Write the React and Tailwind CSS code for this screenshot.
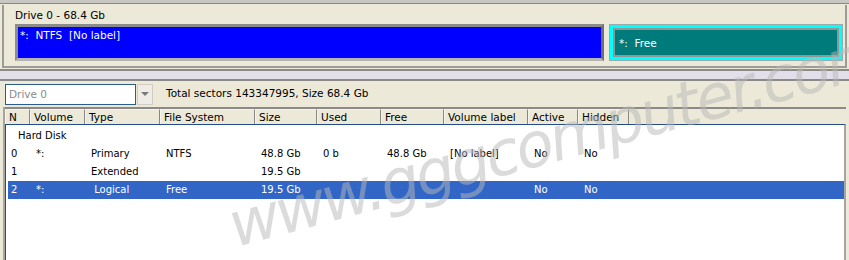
import React from "react";

const cols = [
  { label: "N", w: 25 },
  { label: "Volume", w: 55 },
  { label: "Type", w: 75 },
  { label: "File System", w: 95 },
  { label: "Size", w: 62 },
  { label: "Used", w: 64 },
  { label: "Free", w: 63 },
  { label: "Volume label", w: 84 },
  { label: "Active", w: 50 },
  { label: "Hidden", w: 51 },
];

const rows = [
  ["0", "*:", "Primary", "NTFS", "48.8 Gb", "0 b", "48.8 Gb", "[No label]", "No", "No"],
  ["1", "", "Extended", "", "19.5 Gb", "", "", "", "", ""],
  ["2", "*:", " Logical", "Free", "19.5 Gb", "", "", "", "No", "No"],
];

const App = () => {
  return (
    <div
      className="relative w-[849px] h-[260px] overflow-hidden bg-[#ece9d8] text-[10px] text-black flex flex-col"
      style={{ fontFamily: '"DejaVu Sans", "Liberation Sans", sans-serif' }}
    >
      {/* top window edge */}
      <div className="h-[4px] bg-[#c9c7c4] border-b border-[#8a8886]"></div>

      {/* drive map panel */}
      <div className="mx-[2px] mt-[1px] h-[63px] border-l-2 border-r-2 border-b-2 border-[#9d9b97] flex flex-col">
        <div className="h-[18px] pl-[11px] pt-[3px] leading-[14px] text-[10.5px]">Drive 0 - 68.4 Gb</div>
        <div className="flex items-start gap-[5px] pl-[11px] pt-[1px]">
          <div className="w-[589px] h-[37px] bg-[#0000ff] border-[3px] border-t-[#8c8c8c] border-l-[#8c8c8c] border-b-[#b5b5b5] border-r-[#6f6f6f] text-white pl-[2px] pt-[1px] leading-[14px] text-[10.5px]">
            *: &nbsp;NTFS &nbsp;[No label]
          </div>
          <div className="w-[234px] h-[37px] border border-[#9aa] bg-[#00ffff] p-[3px]">
            <div className="h-full bg-[#007b7b] border-2 border-[#8f9694] text-white text-[10.5px] pl-[4px] pt-[6px] leading-[14px]">
              *:&nbsp; Free
            </div>
          </div>
        </div>
      </div>

      {/* splitter */}
      <div className="h-[12px] mt-[1px] bg-[#e3dfea] border-t-2 border-b-2 border-[#8c8a88]"></div>

      {/* toolbar */}
      <div className="h-[26px] flex items-center pl-[5px]">
        <div className="w-[131px] h-[21px] border border-[#2b5d8c] bg-white text-[#8a8a8a] pl-[3px] leading-[19px] text-[10.5px]">
          Drive 0
        </div>
        <div className="w-[16px] h-[21px] ml-[1px] border border-[#cfcdc6] bg-[#eeece4] flex items-center justify-center">
          <div className="w-0 h-0 border-l-[4px] border-r-[4px] border-t-[4px] border-l-transparent border-r-transparent border-t-[#7a7a7a]"></div>
        </div>
        <div className="ml-[13px] text-[10.5px]">Total sectors 143347995, Size 68.4 Gb</div>
      </div>

      {/* table */}
      <div className="flex-1 flex flex-col mx-[3px] border-l-2 border-[#a8a4a0]">
        <div className="h-[17px] flex border-t-2 border-[#8c8a88]">
          {cols.map((c) => (
            <div
              key={c.label}
              style={{ width: c.w }}
              className="shrink-0 h-[16px] border border-t-[#f4f3ef] border-l-[#f4f3ef] border-b-[#8a8886] border-r-[#8a8886] pl-[3px] leading-[14px] text-[10.5px] whitespace-nowrap overflow-hidden"
            >
              {c.label}
            </div>
          ))}
          <div className="flex-1"></div>
        </div>
        <div className="flex-1 bg-white border-l border-t border-[#244c86] border-r-2 border-r-[#a8a4a0] pt-[2px]">
          <div className="h-[18px] pl-[12px] leading-[18px]">Hard Disk</div>
          {rows.map((r, i) => (
            <div
              key={i}
              className={`h-[18px] flex leading-[18px] ml-[2px] ${
                i === 2 ? "bg-[#3166c7] text-white" : ""
              }`}
            >
              {r.map((v, j) => (
                <div
                  key={j}
                  style={{ width: cols[j].w - (j === 0 ? 3 : 0) }}
                  className={`shrink-0 whitespace-pre overflow-hidden ${j === 0 ? "pl-[3px]" : "pl-[6px]"}`}
                >
                  {v}
                </div>
              ))}
            </div>
          ))}
        </div>
      </div>

      {/* watermark */}
      <div
        className="absolute left-[230px] top-[196px] text-[62px] italic font-light tracking-[-3px] text-[#b8b8b8] opacity-50 whitespace-nowrap pointer-events-none origin-left rotate-[-15deg] leading-none"
        style={{ fontFamily: '"DejaVu Sans", sans-serif' }}
      >
        www.gggcomputer.com
      </div>
    </div>
  );
};

export default App;
